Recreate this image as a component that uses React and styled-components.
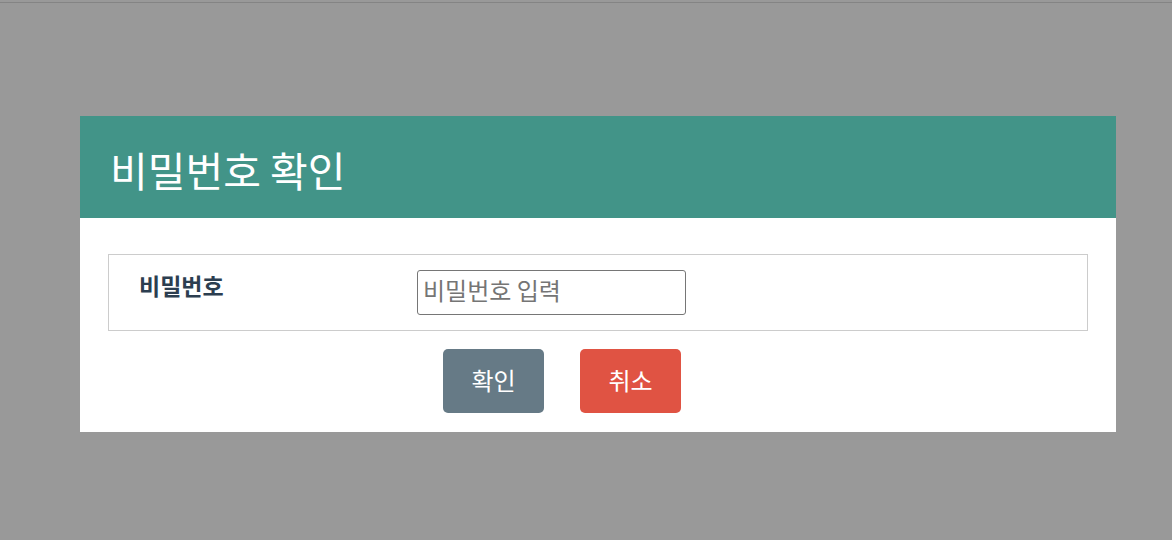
import React from "react";
import styled, { createGlobalStyle } from "styled-components";

const GlobalStyle = createGlobalStyle`
  html, body {
    margin: 0;
    padding: 0;
    background-color: #999999;
  }
  body {
    font-family: "Noto Sans CJK KR", "Noto Sans", sans-serif;
  }
`;

const Overlay = styled.div`
  width: 1172px;
  height: 540px;
  background-color: #999999;
  border-top: 1px solid #848484;
  margin-top: 2px;
  padding-top: 113px;
  box-sizing: border-box;
  overflow: hidden;
`;

const Modal = styled.div`
  width: 1036px;
  margin-left: 80px;
  background-color: white;
`;

const Header = styled.div`
  height: 102px;
  background-color: #429488;
  display: flex;
  align-items: center;
  padding: 0 30px;
  box-sizing: border-box;
`;

const Title = styled.h2`
  margin: 0;
  color: white;
  font-size: 41px;
  font-weight: 400;
  line-height: 1;
  position: relative;
  top: 2px;
`;

const Body = styled.div`
  padding: 36px 28px 19px;
`;

const FormBox = styled.div`
  border: 1px solid #cccccc;
  height: 77px;
  box-sizing: border-box;
  display: flex;
  align-items: flex-start;
`;

const Label = styled.div`
  width: 308px;
  padding: 14px 0 0 30px;
  box-sizing: border-box;
  font-size: 23px;
  font-weight: 700;
  color: #2c3e50;
  line-height: 32px;
`;

const InputCell = styled.div`
  padding-top: 15px;
`;

const PasswordInput = styled.input`
  width: 269px;
  height: 45px;
  box-sizing: border-box;
  border: 1px solid #767676;
  border-radius: 3px;
  padding: 0 5px 6px;
  font-size: 24px;
  font-family: "Noto Sans CJK KR", "Noto Sans", sans-serif;
  color: #333;
  outline: none;
  ::placeholder {
    color: #757575;
  }
`;

const Buttons = styled.div`
  display: flex;
  justify-content: center;
  gap: 36px;
  padding-right: 72px;
  margin-top: 18px;
`;

const Button = styled.button`
  width: 101px;
  height: 64px;
  border: none;
  border-radius: 5px;
  padding: 0 0 4px;
  background-color: ${(p) => (p.$cancel ? "#e05343" : "#667a86")};
  color: white;
  font-size: 24px;
  font-family: "Noto Sans CJK KR", "Noto Sans", sans-serif;
  cursor: pointer;
`;

const App = () => {
  return (
    <>
      <GlobalStyle />
      <Overlay>
        <Modal>
          <Header>
            <Title>비밀번호 확인</Title>
          </Header>
          <Body>
            <FormBox>
              <Label>비밀번호</Label>
              <InputCell>
                <PasswordInput type="password" placeholder="비밀번호 입력" />
              </InputCell>
            </FormBox>
            <Buttons>
              <Button>확인</Button>
              <Button $cancel>취소</Button>
            </Buttons>
          </Body>
        </Modal>
      </Overlay>
    </>
  );
};

export default App;
